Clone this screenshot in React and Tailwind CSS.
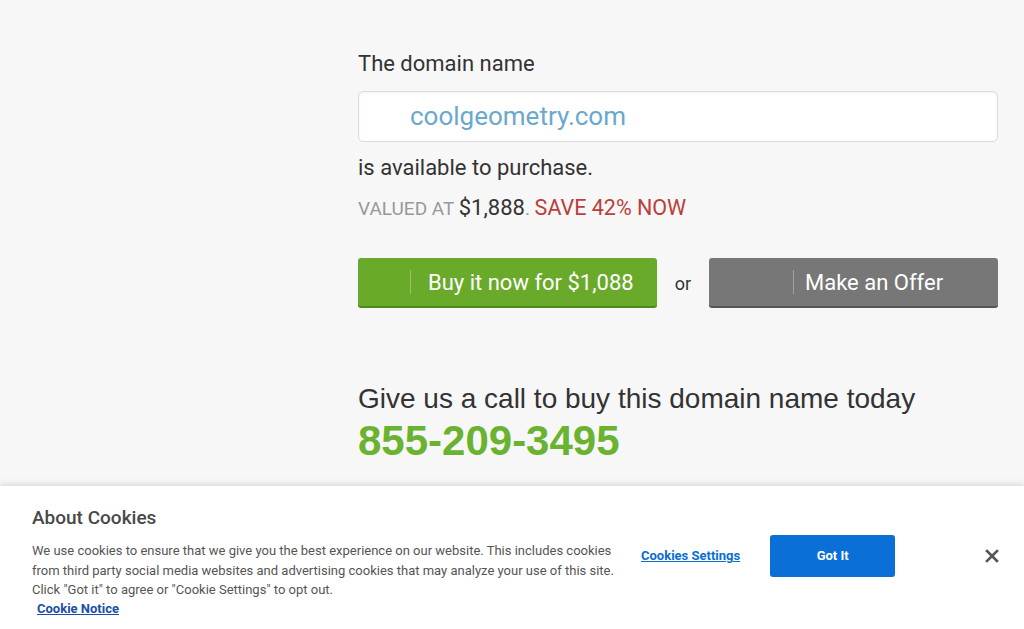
export default function App() {
  return (
    <div className="relative min-h-[629px] w-full overflow-hidden bg-[#f7f7f7] font-['Roboto',sans-serif]">
      <div className="ml-[358px] w-[640px] pt-[50px]">
        <p className="text-[22px] leading-[28px] text-[#333]">The domain name</p>
        <div className="mt-[13px] flex h-[51px] items-center rounded-[5px] border border-[#dcdcdc] bg-white pl-[51px] shadow-[inset_0_1px_3px_rgba(0,0,0,0.06)]">
          <span className="text-[26px] text-[#6aa8cc]">coolgeometry.com</span>
        </div>
        <p className="mt-[12px] text-[22px] leading-[28px] text-[#333]">is available to purchase.</p>
        <p className="mt-[11px] leading-[30px]">
          <span className="text-[19px] text-[#999]">VALUED AT </span>
          <span className="text-[22px] text-[#333]">$1,888</span>
          <span className="text-[19px] text-[#999]">. </span>
          <span className="text-[21.5px] text-[#b9403a]">SAVE 42% NOW</span>
        </p>
        <div className="mt-[33px] flex items-center">
          <button className="flex h-[50px] w-[299px] items-center rounded-[3px] border-b-2 border-[#4f8a1a] bg-[#6aaa2a] text-white">
            <span className="ml-[52px] h-[24px] w-px bg-white/30" />
            <span className="ml-[17px] text-[22px]">Buy it now for $1,088</span>
          </button>
          <span className="w-[52px] text-center text-[18px] text-[#333]">or</span>
          <button className="flex h-[50px] w-[289px] items-center rounded-[3px] border-b-2 border-[#555] bg-[#777] text-white">
            <span className="ml-[84px] h-[24px] w-px bg-white/30" />
            <span className="ml-[11px] text-[22px]">Make an Offer</span>
          </button>
        </div>
        <p className="mt-[75px] font-['Liberation_Sans',Arial,sans-serif] text-[28px] leading-[32px] text-[#333]">
          Give us a call to buy this domain name today
        </p>
        <p className="mt-[3px] font-['Liberation_Sans',Arial,sans-serif] text-[42px] font-bold leading-[46px] text-[#6ab330]">
          855-209-3495
        </p>
      </div>

      <div className="absolute bottom-0 left-0 right-0 h-[143px] bg-white shadow-[0_-2px_6px_rgba(0,0,0,0.12)]">
        <div className="flex">
          <div className="ml-[32px] w-[590px] pt-[21px]">
            <h2 className="text-[19px] font-medium leading-[22px] text-[#484848]">About Cookies</h2>
            <p className="mt-[12px] text-[13px] leading-[19.5px] text-[#555]">
              We use cookies to ensure that we give you the best experience on our website. This includes cookies from third party social media websites and advertising cookies that may analyze your use of this site. Click "Got it" to agree or "Cookie Settings" to opt out.
            </p>
            <div className="leading-[15px]">
              <a href="#" className="ml-[5px] text-[13px] font-bold text-[#1a4ea8] underline">Cookie Notice</a>
            </div>
          </div>
          <div className="ml-[19px] flex items-center self-start pt-[49px]">
            <a href="#" className="text-[13px] font-bold text-[#0a6ed1] underline">Cookies Settings</a>
            <button className="ml-[30px] h-[42px] w-[125px] rounded-[3px] bg-[#0a6fd6] text-[13px] font-bold text-white">Got It</button>
            <button className="ml-[90px] text-[#555]">
              <svg width="14" height="14" viewBox="0 0 14 14" fill="none" stroke="currentColor" strokeWidth="2.6" strokeLinecap="square">
                <path d="M2 2l10 10M12 2L2 12" />
              </svg>
            </button>
          </div>
        </div>
      </div>
    </div>
  );
}
